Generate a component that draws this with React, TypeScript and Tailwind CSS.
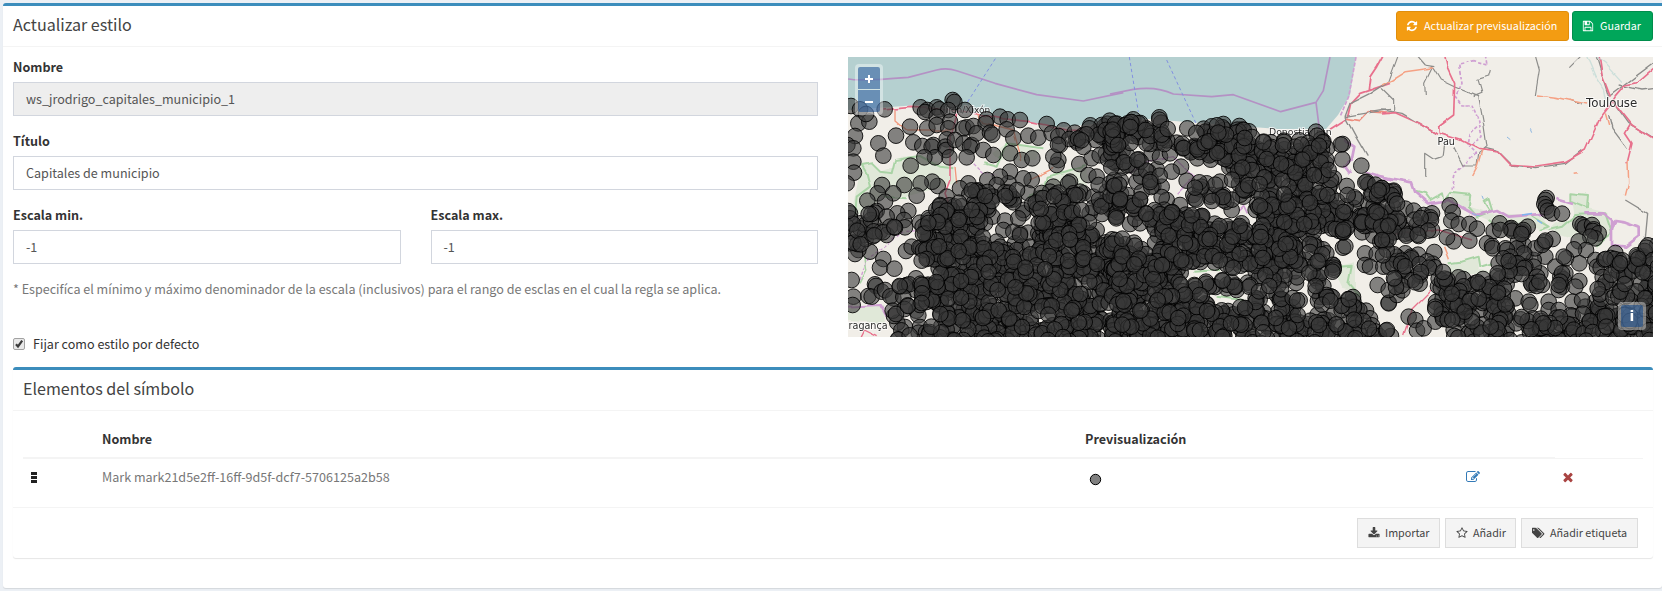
import type { ReactNode } from "react";

const ICONS = {
  refresh:
    "M1639 1056q0 5-1 7-64 268-268 434.500t-478 166.500q-146 0-282.500-55t-243.500-157l-129 129q-19 19-45 19t-45-19-19-45v-448q0-26 19-45t45-19h448q26 0 45 19t19 45-19 45l-137 137q71 66 161 102t187 36q134 0 250-65t186-179q11-17 53-117 8-23 30-23h192q13 0 22.500 9.500t9.500 22.500zm25-800v448q0 26-19 45t-45 19h-448q-26 0-45-19t-19-45 19-45l138-138q-148-137-349-137-134 0-250 65t-186 179q-11 17-53 117-8 23-30 23h-199q-13 0-22.500-9.500t-9.500-22.500v-7q65-268 270-434.500t480-166.500q146 0 284 55.500t245 156.500l130-129q19-19 45-19t45 19 19 45z",
  save: "M512 1536h768v-384h-768v384zm896 0h128v-896q0-14-10-38.500t-20-34.500l-281-281q-10-10-34-20t-39-10v416q0 40-28 68t-68 28h-576q-40 0-68-28t-28-68v-416h-128v1280h128v-416q0-40 28-68t68-28h832q40 0 68 28t28 68v416zm-384-928v-320q0-13-9.500-22.500t-22.500-9.500h-192q-13 0-22.500 9.500t-9.500 22.500v320q0 13 9.500 22.500t22.500 9.500h192q13 0 22.500-9.500t9.500-22.500zm640 32v928q0 40-28 68t-68 28h-1344q-40 0-68-28t-28-68v-1344q0-40 28-68t68-28h928q40 0 88 20t76 48l280 280q28 28 48 76t20 88z",
  download:
    "M1344 1344q0-26-19-45t-45-19-45 19-19 45 19 45 45 19 45-19 19-45zm256 0q0-26-19-45t-45-19-45 19-19 45 19 45 45 19 45-19 19-45zm128-224v320q0 40-28 68t-68 28h-1472q-40 0-68-28t-28-68v-320q0-40 28-68t68-28h465l135 136q58 56 136 56t136-56l136-136h464q40 0 68 28t28 68zm-325-569q17 41-14 70l-448 448q-18 19-45 19t-45-19l-448-448q-31-29-14-70 17-39 59-39h256v-448q0-26 19-45t45-19h256q26 0 45 19t19 45v448h256q42 0 59 39z",
  star: "M1201 1004l306-297-422-62-189-382-189 382-422 62 306 297-73 421 378-199 377 199zm527-357q0 22-26 48l-363 354 86 500q1 7 1 20 0 50-41 50-19 0-40-12l-449-236-449 236q-22 12-40 12-21 0-31.500-14.500t-10.500-35.500q0-6 2-20l86-500-364-354q-25-27-25-48 0-37 56-46l502-73 225-455q19-41 49-41t49 41l225 455 502 73q56 9 56 46z",
  tags: "M384 448q0-53-37.500-90.500t-90.500-37.500-90.500 37.500-37.500 90.500 37.500 90.500 90.500 37.500 90.500-37.500 37.500-90.500zm1067 576q0 53-37 90l-491 492q-39 37-91 37-53 0-90-37l-715-716q-38-37-64.500-101t-26.500-117v-416q0-52 38-90t90-38h416q53 0 117 26.500t102 64.500l715 714q37 39 37 91zm384 0q0 53-37 90l-491 492q-39 37-91 37-36 0-59-14t-53-45l470-470q37-37 37-90 0-52-37-91l-715-714q-38-38-102-64.500t-117-26.500h224q53 0 117 26.500t102 64.500l715 714q37 39 37 91z",
  edit: "M888 1184l116-116-152-152-116 116v56h96v96h56zm440-720q-16-16-33 1l-350 350q-17 17-1 33t33-1l350-350q17-17 1-33zm80 594v190q0 119-84.500 203.500t-203.500 84.500h-832q-119 0-203.500-84.500t-84.500-203.500v-832q0-119 84.500-203.500t203.500-84.500h832q63 0 117 25 15 7 18 23 3 17-9 29l-49 49q-14 14-32 8-23-6-45-6h-832q-66 0-113 47t-47 113v832q0 66 47 113t113 47h832q66 0 113-47t47-113v-126q0-13 9-22l64-64q15-15 35-7t20 29zm-96-738l288 288-672 672h-288v-288zm444 132l-92 92-288-288 92-92q28-28 68-28t68 28l152 152q28 28 28 68t-28 68z",
  times:
    "M1490 1322q0 40-28 68l-136 136q-28 28-68 28t-68-28l-294-294-294 294q-28 28-68 28t-68-28l-136-136q-28-28-28-68t28-68l294-294-294-294q-28-28-28-68t28-68l136-136q28-28 68-28t68 28l294 294 294-294q28-28 68-28t68 28l136 136q28 28 28 68t-28 68l-294 294 294 294q28 28 28 68z",
};

function Icon({ name, className, box = 1792 }: { name: keyof typeof ICONS; className: string; box?: number }) {
  return (
    <svg viewBox={`0 0 ${box} 1792`} className={className} fill="currentColor" aria-hidden="true">
      <path d={ICONS[name]} />
    </svg>
  );
}

type Pt = [number, number];
type Zone = { step: number; poly: Pt[] };
type Sheet = { at: Pt; seed: number; points: Pt[]; zones: Zone[]; gaps: [number, number, number, number][] };

function inside([x, y]: Pt, poly: Pt[]) {
  let hit = false;
  for (let i = 0, j = poly.length - 1; i < poly.length; j = i++) {
    const [xi, yi] = poly[i];
    const [xj, yj] = poly[j];
    if (yi > y !== yj > y && x < ((xj - xi) * (y - yi)) / (yj - yi) + xi) hit = !hit;
  }
  return hit;
}

function scatter(sheet: Sheet): Pt[] {
  let s = sheet.seed;
  const rnd = () => {
    s = (s * 1664525 + 1013904223) % 4294967296;
    return s / 4294967296;
  };
  const out: { p: Pt; k: number }[] = [];
  for (const z of sheet.zones) {
    const xs = z.poly.map((p) => p[0]);
    const ys = z.poly.map((p) => p[1]);
    for (let y = Math.min(...ys); y <= Math.max(...ys); y += z.step) {
      for (let x = Math.min(...xs); x <= Math.max(...xs); x += z.step) {
        const p: Pt = [
          Math.round(x + (rnd() - 0.5) * z.step * 2.2),
          Math.round(y + (rnd() - 0.5) * z.step * 2.2),
        ];
        const k = rnd();
        const inGap = sheet.gaps.some(
          ([gx, gy, rx, ry]) => ((p[0] - gx) / (rx + 20)) ** 2 + ((p[1] - gy) / (ry + 20)) ** 2 < 1,
        );
        if (!inGap && inside(p, z.poly)) out.push({ p, k });
      }
    }
  }
  out.sort((a, b) => a.k - b.k);
  return [...sheet.points, ...out.map((o) => o.p)];
}

// Municipality positions, three sheets at a third of a pixel per unit.
const SHEETS: Sheet[] = [
  {
    at: [-8, -7],
    seed: 7,
    points: [
      [33, 168], [60, 178], [134, 178], [55, 220], [88, 215], [78, 192], [168, 257], [45, 258], [22, 285], [40, 295],
      [115, 280], [130, 317], [40, 335], [42, 368], [212, 347], [210, 230], [242, 172], [262, 180], [255, 186], [290, 172],
      [298, 178], [338, 150], [343, 156], [375, 180], [325, 180], [290, 200], [262, 235], [290, 225], [330, 215], [325, 235],
      [380, 232], [370, 235], [400, 228], [440, 208], [437, 220], [480, 200], [503, 208], [540, 210], [620, 222], [220, 277],
      [247, 288], [280, 285], [275, 290], [320, 268], [316, 290], [318, 300], [345, 270], [370, 280], [395, 285], [390, 290],
      [410, 250], [450, 248], [457, 254], [430, 300], [500, 238], [520, 265], [565, 257], [595, 263], [635, 250], [460, 315],
      [510, 310], [545, 330], [577, 325], [328, 322], [380, 322], [285, 322], [253, 322], [575, 390], [550, 385], [510, 365],
      [505, 400], [480, 380], [442, 390], [470, 405], [385, 400], [412, 425], [360, 415], [293, 408], [277, 395], [242, 400],
      [193, 405], [126, 405], [113, 430], [160, 430], [230, 437], [82, 452], [135, 455], [205, 483], [172, 490], [110, 483],
      [105, 488], [140, 500], [30, 490], [60, 520], [35, 545], [60, 535], [75, 555], [100, 520], [120, 545], [150, 530],
      [192, 510], [195, 532], [240, 518], [140, 555], [90, 605], [30, 580], [55, 600], [45, 612], [130, 627], [120, 653],
      [163, 656], [35, 690], [198, 603], [215, 590], [228, 685], [105, 703], [108, 708], [85, 738], [95, 740], [125, 725],
      [135, 720], [40, 740], [38, 765], [160, 745], [180, 710], [200, 705], [30, 505], [20, 530], [75, 525], [268, 510],
      [320, 440], [300, 465], [457, 500], [495, 512], [490, 540], [540, 550], [565, 548], [515, 440], [440, 475], [420, 460],
      [550, 490], [525, 580], [500, 600], [565, 430], [600, 445], [640, 410], [690, 395], [685, 400], [660, 285], [655, 330],
      [650, 345], [640, 320], [718, 342], [755, 325], [745, 375], [770, 380], [800, 425], [730, 430], [720, 425], [780, 465],
      [820, 480], [685, 455], [760, 440], [700, 430], [805, 455], [810, 400], [770, 540], [20, 400], [470, 575], [455, 440],
      [520, 545], [435, 520], [595, 550], [460, 440], [510, 450], [522, 448], [550, 480], [535, 505], [545, 590], [530, 600],
      [500, 610], [600, 560], [445, 480], [415, 500], [540, 555], [480, 590], [570, 590], [605, 590],
    ],
    zones: [
      { step: 24, poly: [[650, 240], [720, 225], [850, 210], [850, 330], [780, 330], [740, 300], [650, 300]] },
      { step: 20, poly: [[790, 210], [850, 200], [850, 370], [790, 370]] },
      { step: 24, poly: [[390, 410], [460, 420], [550, 420], [540, 460], [460, 460], [420, 520], [340, 520], [350, 440]] },
      { step: 26, poly: [[20, 480], [110, 490], [190, 520], [120, 560], [60, 590], [20, 600]] },
      { step: 26, poly: [[150, 710], [250, 690], [250, 870], [150, 870]] },
      { step: 18, poly: [[230, 590], [240, 540], [290, 470], [340, 460], [420, 510], [440, 580], [540, 620], [600, 590], [590, 500], [590, 470], [740, 470], [760, 560], [850, 590], [850, 880], [240, 880], [240, 700], [330, 670], [270, 630]] },
      { step: 24, poly: [[240, 600], [330, 600], [330, 720], [250, 720]] },
      { step: 30, poly: [[740, 400], [850, 400], [850, 500], [740, 500]] },
      { step: 26, poly: [[560, 430], [720, 410], [740, 480], [580, 480]] },
    ],
    gaps: [[820, 535, 20, 4], [728, 708, 3, 2], [800, 785, 10, 6], [600, 815, 6, 4], [265, 800, 4, 4]],
  },
  {
    at: [262, -7],
    seed: 21,
    points: [
      [70, 208], [148, 202], [232, 235], [340, 222], [618, 245], [698, 282], [692, 284], [697, 328], [754, 347], [770, 395],
      [775, 403], [230, 392], [213, 350], [185, 365], [140, 358], [130, 408], [155, 410], [80, 395], [30, 458], [85, 488],
      [60, 345], [250, 435], [210, 465], [170, 450], [60, 522], [90, 520], [20, 500], [130, 525], [365, 480], [437, 480],
      [395, 520], [290, 400], [330, 395], [400, 440], [435, 420], [340, 435], [300, 440], [710, 408], [672, 385], [775, 462],
      [765, 610], [800, 612], [765, 645], [780, 650], [803, 705], [836, 758], [768, 782], [780, 805], [740, 775], [820, 650],
      [545, 580], [570, 570], [610, 575], [620, 590], [500, 735], [520, 750], [390, 835], [410, 780], [408, 776], [180, 640],
      [350, 715], [380, 720], [600, 310], [125, 310], [150, 320], [180, 310], [800, 500], [20, 440], [115, 365], [90, 450],
      [215, 290], [240, 302], [262, 325], [200, 278],
    ],
    zones: [
      { step: 20, poly: [[0, 220], [60, 215], [130, 200], [175, 215], [200, 270], [180, 290], [100, 280], [60, 300], [0, 300]] },
      { step: 17, poly: [[215, 275], [260, 245], [300, 222], [390, 220], [430, 250], [450, 300], [440, 350], [370, 345], [300, 330], [220, 310]] },
      { step: 18, poly: [[440, 255], [510, 270], [550, 270], [620, 255], [660, 290], [660, 360], [560, 370], [460, 370], [430, 310]] },
      { step: 20, poly: [[350, 340], [460, 340], [680, 360], [690, 430], [580, 450], [450, 450], [350, 400]] },
      { step: 27, poly: [[0, 300], [130, 340], [180, 350], [170, 430], [130, 540], [0, 500]] },
      { step: 26, poly: [[240, 400], [340, 370], [420, 420], [340, 480], [240, 480]] },
      { step: 18, poly: [[600, 430], [700, 440], [730, 530], [680, 570], [560, 550], [450, 570], [440, 460], [540, 440]] },
      { step: 21, poly: [[760, 390], [830, 410], [850, 570], [790, 570], [730, 500], [790, 490]] },
      { step: 28, poly: [[690, 430], [740, 430], [790, 480], [760, 570], [690, 560]] },
      { step: 17, poly: [[140, 470], [240, 480], [330, 520], [430, 530], [560, 560], [560, 640], [430, 660], [220, 640], [130, 580]] },
      { step: 17, poly: [[0, 550], [150, 580], [230, 640], [230, 690], [430, 690], [430, 720], [250, 720], [320, 770], [440, 770], [430, 880], [0, 880]] },
      { step: 22, poly: [[430, 640], [560, 600], [680, 600], [680, 680], [620, 730], [560, 700], [430, 760]] },
      { step: 20, poly: [[430, 740], [580, 740], [650, 730], [730, 740], [760, 800], [850, 850], [850, 880], [430, 880]] },
      { step: 24, poly: [[550, 570], [720, 570], [740, 600], [550, 610]] },
    ],
    gaps: [[200, 415, 14, 14], [400, 482, 14, 12], [280, 667, 48, 4], [360, 745, 36, 5], [100, 570, 8, 4], [332, 366, 12, 2], [12, 788, 4, 6], [605, 768, 3, 8], [372, 850, 3, 5], [590, 700, 4, 4]],
  },
  {
    at: [534, -57],
    seed: 44,
    points: [
      [35, 572], [38, 582], [70, 626], [95, 632], [125, 645], [150, 640], [145, 652], [203, 616], [212, 637], [208, 662],
      [230, 672], [262, 672], [285, 686], [262, 722], [215, 724], [195, 712], [150, 690], [110, 708], [85, 700], [70, 690],
      [157, 756], [335, 693], [353, 670], [385, 686], [388, 684], [420, 695], [422, 700], [437, 680], [512, 717], [488, 727],
      [494, 594], [490, 600], [487, 612], [492, 622], [497, 632], [510, 640], [540, 641], [595, 672], [602, 676], [608, 682],
      [630, 675], [635, 688], [633, 693], [650, 700], [640, 715], [625, 710], [590, 724], [612, 750], [576, 748], [552, 775],
      [592, 790], [315, 730], [330, 738], [332, 745], [370, 745], [350, 790], [425, 735], [430, 765], [490, 770], [455, 780],
      [395, 795], [385, 800], [535, 830], [545, 838], [540, 860], [550, 820], [592, 843], [580, 860], [572, 905], [530, 870],
      [500, 905], [450, 855], [455, 850], [480, 855], [475, 820], [500, 930], [530, 930], [80, 950], [100, 960], [105, 992],
      [125, 985], [20, 910], [45, 885], [20, 870], [160, 965], [185, 955], [215, 990], [400, 895], [440, 905], [445, 915],
      [635, 935], [640, 905], [610, 920], [600, 900], [730, 845], [685, 840], [750, 880], [720, 900], [690, 870], [800, 850],
      [640, 780], [645, 800], [15, 990], [20, 800], [70, 760], [45, 770], [408, 725], [405, 745], [460, 745], [520, 800],
      [390, 692], [424, 690], [418, 702], [425, 760], [375, 750], [385, 770], [365, 775], [480, 735], [490, 722], [355, 690],
      [455, 800], [430, 800], [465, 830], [540, 820], [535, 845], [530, 855], [545, 770],
    ],
    zones: [
      { step: 19, poly: [[-30, 545], [40, 570], [50, 620], [30, 740], [-30, 750]] },
      { step: 24, poly: [[40, 640], [160, 660], [140, 700], [40, 720]] },
      { step: 26, poly: [[-10, 740], [60, 750], [60, 860], [20, 860]] },
      { step: 21, poly: [[50, 770], [100, 750], [190, 800], [190, 840], [120, 860], [60, 880], [30, 850]] },
      { step: 18, poly: [[160, 830], [380, 830], [380, 940], [160, 930]] },
      { step: 24, poly: [[310, 790], [400, 780], [460, 830], [490, 860], [380, 870]] },
      { step: 20, poly: [[270, 930], [460, 930], [460, 1030], [270, 1030]] },
      { step: 19, poly: [[400, 965], [600, 940], [700, 940], [830, 930], [830, 1030], [400, 1030]] },
      { step: 19, poly: [[650, 790], [690, 755], [750, 765], [790, 735], [830, 735], [830, 940], [780, 930], [760, 820], [660, 850]] },
      { step: 24, poly: [[630, 850], [760, 850], [790, 940], [640, 960]] },
      { step: 24, poly: [[130, 900], [280, 930], [280, 1020], [200, 1010]] },
    ],
    gaps: [[420, 862, 8, 8], [140, 840, 4, 6], [480, 895, 5, 14], [410, 1000, 5, 5], [590, 885, 8, 8]],
  },
];

function Line({ d, c, w = 3, dash, o = 1 }: { d: string; c: string; w?: number; dash?: string; o?: number }) {
  return <path d={d} fill="none" stroke={c} strokeWidth={w} strokeDasharray={dash} strokeLinejoin="round" opacity={o} />;
}

const PINK = "#e8708c";
const RAIL = "#8c8c8a";
const PARK = "#a9d3a5";
const MAUVE = "#cf9fd2";

function MapLabel({ x, y, size, children }: { x: number; y: number; size: number; children: ReactNode }) {
  return (
    <text
      x={x}
      y={y}
      fontSize={size}
      fontFamily="'DejaVu Sans', sans-serif"
      fill="#2b2b2b"
      stroke="#ffffff"
      strokeOpacity={0.7}
      strokeWidth={2}
      paintOrder="stroke"
    >
      {children}
    </text>
  );
}

function MapPreview() {
  return (
    <div className="relative h-[280px] w-full overflow-hidden">
      <svg viewBox="0 0 805 280" className="block h-[280px] w-[805px]">
        <defs>
          <filter id="meander" x="0" y="0" width="805" height="280" filterUnits="userSpaceOnUse">
            <feTurbulence type="fractalNoise" baseFrequency="0.07" numOctaves="1" seed="3" />
            <feDisplacementMap in="SourceGraphic" scale="5" xChannelSelector="R" yChannelSelector="G" />
          </filter>
        </defs>
        <rect width="805" height="280" fill="#f1eee8" />
        <path d="M0 0H508L502 38L490 58L478 72L430 72L300 62L215 70L150 62L120 55L70 48L0 53Z" fill="#b5d0d0" />
        <g transform="translate(-8 -7) scale(.33333)">
          <Line d="M24 87Q60 94 205 82L290 60Q320 52 350 62L465 100L590 134L730 153L850 128" c="#b491c4" w={5} />
          <Line d="M466 26L380 160" c="#8290e0" w={3} dash="10 8" />
        </g>
        <g transform="translate(262 -7) scale(.33333)">
          <Line d="M0 132L70 118Q140 108 190 132L305 140L370 134L512 185L618 157M618 157L640 122L660 21M618 157L626 220L628 245" c="#b491c4" w={5} />
          <Line d="M58 21L85 185M170 30L258 220" c="#8290e0" w={3} dash="10 8" />
          <Line d="M738 21L716 140L690 200" c={MAUVE} w={5} dash="12 5" />
        </g>
        <g filter="url(#meander)">
          <g transform="translate(-8 -7) scale(.33333)">
            <path d="M65 345L95 340L120 365L160 350L180 320L240 318L340 350L345 400L200 440L130 440L45 500L40 460Z" fill="#e0e8d8" />
            <Line d="M65 345L95 340L120 365L155 370L165 330L240 318L300 350L340 355M45 500L50 440L90 410L80 370L65 345M130 440L200 445" c={PARK} w={6} />
            <path d="M460 310L500 280L600 300L590 330L480 330ZM600 400L660 370L740 350L740 420L600 430Z" fill="#e0e8d8" />
            <Line d="M430 340L470 350L500 280L610 295M560 440L610 420L620 380L740 345" c={PARK} w={6} />
            <path d="M24 775L130 765L135 820L24 812Z" fill="#e0e8d8" />
            <Line d="M24 770L120 765L140 800" c={MAUVE} w={6} />
            <Line d="M60 860L70 840L110 860" c={PINK} w={4} />
            <Line d="M60 700L80 660L75 620" c={PARK} w={5} />
            <Line d="M130 180L215 172L350 180L480 205L570 215L620 225L680 240L850 245" c={PINK} w={5} />
            <Line d="M350 190L330 260L330 390L315 430L330 470" c={PINK} w={5} />
            <Line d="M410 180L420 215L520 240L545 330M570 390L640 355M165 180L165 210L200 240L340 240M345 350L350 400" c="#f0987c" w={4} />
            <Line d="M60 690L80 630L190 545L250 540M390 330L430 370L470 375" c={MAUVE} w={4} dash="10 6" />
          </g>
          <g transform="translate(262 -7) scale(.33333)">
            <Line d="M660 238L712 205L722 160L750 130L840 100M775 120L780 80L800 50L822 10" c={PINK} w={5.5} />
            <Line d="M712 205L750 212L775 185L840 190" c="#ee8f80" w={5.5} />
            <Line d="M705 200L720 160L780 130L835 95M705 200L840 178M705 200L740 265L772 320" c={RAIL} w={4} />
            <Line d="M700 270L733 290L725 330L705 350L720 370M770 365L850 390" c={MAUVE} w={8} />
            <Line d="M60 370L110 335L190 320L250 380L200 430" c={MAUVE} w={4} />
            <path d="M670 655L735 640L735 720L700 715Z" fill="#e0e8d8" />
            <Line d="M670 655L725 650L715 700L750 740M250 665L330 660M320 740L400 750" c={PARK} w={6} />
            <Line d="M385 480L400 465L412 490" c={MAUVE} w={5} />
          </g>
          <g transform="translate(534 -57) scale(.33333)">
            <path d="M200 790L290 770L290 810L350 820L200 825ZM565 580L618 585L615 625L680 640L690 700L650 740L560 710L500 690L520 670L575 650ZM205 580L265 580L265 620L320 640L480 645L500 690L340 670L230 625Z" fill="#e0e8d8" />
            <Line d="M100 572L130 580L145 600L180 580L185 605L205 578L265 585L260 620L285 650L330 630L320 597L305 605L325 635M200 790L240 785L290 770L295 800L330 790M565 580L618 585L615 625L565 605ZM500 690L540 680L580 645L670 640L690 700L640 740M320 660L360 690M450 650L500 680L470 690" c={PARK} w={6} />
            <Line d="M0 530L90 547L100 575L140 610L200 600L280 645L345 630L380 650L500 640M520 597L570 612M610 640L665 640L690 660L690 735L730 740L770 710L770 680L730 665L700 660L690 690" c={MAUVE} w={8} />
            <Line d="M275 185L230 195L240 250L220 290L240 315L270 315L290 360L300 410L260 440L280 460L220 520L210 570M310 165L315 195L275 185M285 380L262 400L255 435" c={MAUVE} w={5} dash="10 6" />
            <Line d="M48 160L15 250L0 260M0 265L35 300L35 335M150 200L175 240L220 262L290 290L305 370L315 440L290 460L285 495L242 495L215 440M130 285L128 250L152 200M325 210L320 228L288 238L300 280L275 290M185 430L180 470L155 478L128 460L128 530M458 160L472 210L460 285M100 160L130 195L160 200M562 203L605 160M560 300L600 315" c={RAIL} w={3.5} />
            <Line d="M0 330L60 340L160 400M310 445L350 455L390 495L460 503L550 490L600 450M640 160L655 210L680 290L820 185M690 300L740 370L820 418M680 345L690 385L735 445M730 600L797 640L790 715M710 255L780 270L820 265" c={RAIL} w={4} />
            <Line d="M0 342L40 338L110 370L165 403M187 160L195 200L218 250L215 345L170 378L172 400L235 420L290 448L350 456L385 493L460 498L550 485L610 450L650 360L685 315L700 290L730 255L765 248L820 200M650 160L660 225L685 290M690 300L750 375L820 420M745 375L730 400L750 430L735 490" c={PINK} w={5} />
            <Line d="M0 255L30 240L70 215L155 203M465 285L520 292L580 305L615 312M300 450L285 500L272 525M670 340L680 375M738 480L740 550L730 590M575 520L585 518M185 740L200 780" c="#f5a184" w={4.5} />
            <Line d="M610 160L640 230L665 270L670 300M630 160L670 190L720 245" c="#bcd8d4" w={4} o={0.7} />
            <path d="M745 130l5 6-6 3zM445 385l4 10M375 408l10 8M300 590l4 10M270 640l20 8" stroke="#8db6e0" strokeWidth={3} fill="none" />
            <Line d="M420 645L450 640M465 660L480 670" c="#7fb5f0" w={4} />
            <Line d="M20 700L170 690L270 720M65 1005L90 930L150 870" c={PINK} w={4} />
          </g>
        </g>
        <MapLabel x={738} y={49.500} size={11.8}>Toulouse</MapLabel>
        <MapLabel x={589.5} y={88} size={9.7}>Pau</MapLabel>
        <MapLabel x={91} y={56} size={9}>Gijón/Xixón</MapLabel>
        <MapLabel x={421} y={77.500} size={9.3}>Donostia/Irun</MapLabel>
        <MapLabel x={-6} y={272} size={9.6}>Bragança</MapLabel>
        {SHEETS.map((sheet) => (
          <g
            key={sheet.seed}
            transform={`translate(${sheet.at[0]} ${sheet.at[1]}) scale(.33333)`}
            fill="#383838"
            fillOpacity={0.6}
            stroke="#000000"
            strokeWidth={2.6}
          >
            {scatter(sheet).map(([x, y], i) => (
              <circle key={i} cx={x} cy={y} r={23.5} />
            ))}
          </g>
        ))}
      </svg>
      <div className="absolute top-[7px] left-[7px] flex flex-col gap-px rounded-[4px] bg-white/40 p-[3px] text-white">
        <button className="grid size-[22px] place-items-center rounded-t-[2px] bg-[#003c88]/50">
          <svg viewBox="0 0 22 22" className="size-[22px]" stroke="currentColor" strokeWidth="2">
            <path d="M7 12h8M11 8v8" />
          </svg>
        </button>
        <button className="grid size-[22px] place-items-center rounded-b-[2px] bg-[#003c88]/50">
          <svg viewBox="0 0 22 22" className="size-[22px]" stroke="currentColor" strokeWidth="2">
            <path d="M7 12h8" />
          </svg>
        </button>
      </div>
      <div className="absolute right-[7px] bottom-[7px] rounded-[4px] bg-white/40 p-[3px]">
        <button className="block size-[22px] rounded-[2px] bg-[#003c88]/50 text-center font-['DejaVu_Sans'] text-[14px] leading-[22px] font-bold text-white">
          i
        </button>
      </div>
    </div>
  );
}

function Field({ label, value, disabled }: { label: string; value: string; disabled?: boolean }) {
  return (
    <div className="mb-[15px] flex-1">
      <div className="mb-[5px] leading-5 font-bold text-[#333]">{label}</div>
      <div
        className={`h-[34px] border border-[#d2d6de] px-3 leading-8 text-[#555] ${disabled ? "bg-[#eee]" : "bg-white"}`}
      >
        {value}
      </div>
    </div>
  );
}

function FooterButton({ children, className }: { children: ReactNode; className: string }) {
  return (
    <button
      className={`flex h-[30px] items-center border border-[#ddd] bg-[#f4f4f4] pl-[10px] text-[10.76px] leading-[18px] whitespace-nowrap text-[#444] ${className}`}
    >
      {children}
    </button>
  );
}

export default function App() {
  return (
    <div className="h-[591px] w-[1662px] overflow-hidden bg-[#ecf0f5] pt-[3px] pl-[3px] font-['Noto_Sans_CJK_SC',sans-serif] text-[12.57px] text-[#333]">
      <section className="h-[585px] rounded-[3px] rounded-tr-none border-t-[3px] border-[#3c8dbc] bg-white shadow-[0_1px_1px_rgba(0,0,0,0.1)]">
        <header className="flex h-[41px] items-center justify-between border-b border-[#f4f4f4] pr-[9px] pl-[10px]">
          <h3 className="pb-1 text-[16.1px] leading-[18px] text-[#444]">Actualizar estilo</h3>
          <div className="flex gap-[3px] text-[10.76px] leading-[18px] whitespace-nowrap text-white">
            <button className="flex h-[30px] w-[173px] items-center rounded-[3px] border border-[#e08e0b] bg-[#f39c12] pl-[9px]">
              <Icon name="refresh" className="mr-[6px] size-3" />
              Actualizar previsualización
            </button>
            <button className="flex h-[30px] w-[81px] items-center rounded-[3px] border border-[#008d4c] bg-[#00a65a] pl-[9px]">
              <Icon name="save" className="mr-[6px] size-3" />
              Guardar
            </button>
          </div>
        </header>

        <div className="pt-[10px] pr-[9px] pl-[10px]">
          <div className="flex gap-[30px]">
            <div className="h-[310px] w-[805px]">
              <Field label="Nombre" value="ws_jrodrigo_capitales_municipio_1" disabled />
              <Field label="Título" value="Capitales de municipio" />
              <div className="flex gap-[30px]">
                <Field label="Escala min." value="-1" />
                <Field label="Escala max." value="-1" />
              </div>
              <p className="leading-5 text-[#777]">
                * Especifíca el mínimo y máximo denominador de la escala (inclusivos) para el rango de esclas en el cual la
                regla se aplica.
              </p>
              <div className="mt-[35px] flex items-center leading-5">
                <svg viewBox="0 0 12 12" className="mr-2 size-3">
                  <rect x=".5" y=".5" width="11" height="11" rx="1.5" fill="#e9e9e9" stroke="#a2a2a2" />
                  <path d="M3 6.200L5 8.500L9.200 2.600" fill="none" stroke="#3b3b3b" strokeWidth="2.200" />
                </svg>
                Fijar como estilo por defecto
              </div>
            </div>
            <div className="w-[805px]">
              <MapPreview />
            </div>
          </div>

          <section className="h-[191px] rounded-[3px] border-t-[3px] border-[#3c8dbc] bg-white shadow-[0_1px_1px_rgba(0,0,0,0.1)]">
            <header className="flex h-[41px] items-center border-b border-[#f4f4f4] px-[10px]">
              <h3 className="pb-1 text-[16.1px] leading-[18px] text-[#444]">Elementos del símbolo</h3>
            </header>
            <div className="h-[96px] px-[10px] pt-[10px]">
              <div className="flex h-[38px] items-end font-bold">
                <div className="flex h-[38px] w-[1532px] border-b-2 border-[#f4f4f4] pt-[8px] leading-5">
                  <div className="w-[79px]" />
                  <div className="w-[983px]">Nombre</div>
                  <div>Previsualización</div>
                </div>
                <div className="h-px w-[88px] bg-[#f4f4f4]" />
              </div>
              <div className="flex pt-[8px] leading-5 text-[#777]">
                <div className="flex w-[79px] items-center pl-[8px]">
                  <svg viewBox="0 0 6 11" className="h-[11px] w-[6px]" fill="#222">
                    <path d="M0 0h6v3H0zM0 4h6v3H0zM0 8h6v3H0z" />
                  </svg>
                </div>
                <div className="w-[983px]">Mark mark21d5e2ff-16ff-9d5f-dcf7-5706125a2b58</div>
                <div className="w-[381px] pt-[6px] pl-[4px]">
                  <svg viewBox="0 0 13 13" className="size-[13px]">
                    <circle cx="6.5" cy="6.5" r="5.2" fill="#808080" stroke="#000" />
                  </svg>
                </div>
                <div className="w-[95px] pt-[3px] text-[#337ab7]">
                  <Icon name="edit" className="size-[14px]" />
                </div>
                <div className="pt-[3px] text-[#a94442]">
                  <Icon name="times" className="size-[14px]" />
                </div>
              </div>
            </div>
            <footer className="flex h-[51px] justify-end gap-[5px] border-t border-[#f4f4f4] pt-[10px] pr-[15px]">
              <FooterButton className="w-[83px]">
                <Icon name="download" className="mr-[5px] size-3" />
                Importar
              </FooterButton>
              <FooterButton className="w-[71px]">
                <Icon name="star" className="mr-[5px] size-3" />
                Añadir
              </FooterButton>
              <FooterButton className="w-[117px]">
                <Icon name="tags" box={1920} className="mr-[5px] h-3 w-[13px]" />
                Añadir etiqueta
              </FooterButton>
            </footer>
          </section>
        </div>
      </section>
    </div>
  );
}
